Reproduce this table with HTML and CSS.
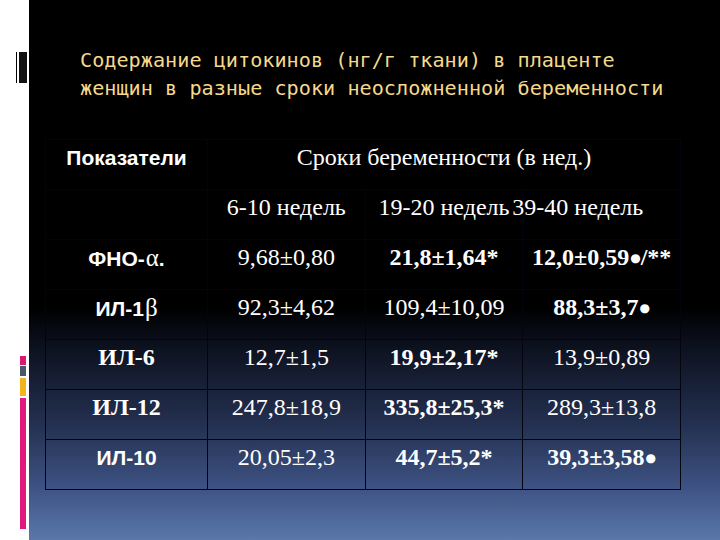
FILE: index.html
```html
<!DOCTYPE html>
<html lang="ru">
<head>
<meta charset="utf-8">
<title>Цитокины</title>
<link rel="stylesheet" href="styles.css">
</head>
<body>
<div class="slide">
  <aside class="rail">
    <div class="rail-box"></div>
    <div class="rail-stripes">
      <div class="st st-pink-s"></div>
      <div class="st st-gray"></div>
      <div class="st st-yellow"></div>
      <div class="st st-pink-l"></div>
    </div>
  </aside>
  <main class="main">
    <h1 class="title">Содержание цитокинов (нг/г ткани) в плаценте<br>женщин в разные сроки неосложненной беременности</h1>
    <table class="data">
      <colgroup><col class="c1"><col><col><col></colgroup>
      <tr>
        <td class="lbl sans">Показатели</td>
        <td colspan="3">Сроки беременности (в нед.)</td>
      </tr>
      <tr>
        <td></td>
        <td>6-10 недель</td>
        <td>19-20 недель</td>
        <td class="wide">39-40 недель</td>
      </tr>
      <tr>
        <td class="lbl sans">ФНО-<span class="greek">α</span>.</td>
        <td>9,68±0,80</td>
        <td class="b">21,8±1,64*</td>
        <td class="b">12,0±0,59<span class="dot">●</span>/**</td>
      </tr>
      <tr>
        <td class="lbl sans">ИЛ-1<span class="greek">β</span></td>
        <td>92,3±4,62</td>
        <td>109,4±10,09</td>
        <td class="b">88,3±3,7<span class="dot">●</span></td>
      </tr>
      <tr>
        <td class="lbl b">ИЛ-6</td>
        <td>12,7±1,5</td>
        <td class="b">19,9±2,17*</td>
        <td>13,9±0,89</td>
      </tr>
      <tr>
        <td class="lbl b">ИЛ-12</td>
        <td>247,8±18,9</td>
        <td class="b">335,8±25,3*</td>
        <td>289,3±13,8</td>
      </tr>
      <tr>
        <td class="lbl sans">ИЛ-10</td>
        <td>20,05±2,3</td>
        <td class="b">44,7±5,2*</td>
        <td class="b">39,3±3,58<span class="dot">●</span></td>
      </tr>
    </table>
  </main>
</div>
</body>
</html>
```

FILE: styles.css
```css
* { box-sizing: border-box; }
html, body { margin: 0; padding: 0; }
body { width: 720px; height: 540px; overflow: hidden; background: #fff; }

.slide { display: flex; width: 720px; height: 540px; }

.rail {
  width: 29px;
  flex: none;
  background: #fff;
  display: flex;
  flex-direction: column;
  align-items: flex-start;
}
.rail-box {
  margin-top: 52px;
  margin-left: 16px;
  width: 11px;
  height: 31px;
  background: linear-gradient(to right, #000 0 1.5px, #fff 1.5px 3px, #111 3px);
}
.rail-stripes {
  margin-top: 273px;
  margin-left: 20px;
  width: 6px;
  display: flex;
  flex-direction: column;
}
.st { width: 6px; }
.st-pink-s { height: 9px; background: #d8196f; }
.st-gray { height: 10px; margin-top: 1px; background: #4c5765; }
.st-yellow { height: 18px; margin-top: 2px; background: #f2b51c; }
.st-pink-l { height: 131px; margin-top: 2px; background: #e2197c; }

.main {
  flex: 1;
  background: linear-gradient(to bottom, #000 0%, #000 57%, #0e1322 65%, #243152 79%, #3d5282 90%, #5a77aa 100%);
  padding: 46px 0 0 16px;
}

.title {
  margin: 0 0 37px 35px;
  font-family: "DejaVu Sans Mono", "Liberation Mono", monospace;
  font-weight: normal;
  font-size: 20.2px;
  line-height: 28px;
  color: #f5d98c;
  letter-spacing: 0;
  white-space: nowrap;
}

.data {
  border-collapse: collapse;
  table-layout: fixed;
  width: 636px;
  font-family: "Liberation Serif", "Times New Roman", serif;
  font-size: 24px;
  color: #fff;
}
.data col.c1 { width: 162px; }
.data td {
  height: 50px;
  border: 1px solid #03050e;
  text-align: center;
  vertical-align: top;
  padding: 3px 0 0;
  line-height: 28px;
  white-space: nowrap;
}
.data td.b { font-weight: bold; }
.data td.sans {
  font-family: "Liberation Sans", Arial, sans-serif;
  font-weight: bold;
  font-size: 21px;
  padding-top: 4px;
}
.data td.sans .greek {
  font-family: "Liberation Serif", "Times New Roman", serif;
  font-weight: normal;
  font-size: 25px;
  padding-left: 1px;
}
.data td.wide { text-align: left; text-indent: -11px; }
.dot {
  font-family: "DejaVu Sans", sans-serif;
  font-size: 12px;
  font-weight: normal;
  vertical-align: 3px;
  margin-left: 1px;
}
```
